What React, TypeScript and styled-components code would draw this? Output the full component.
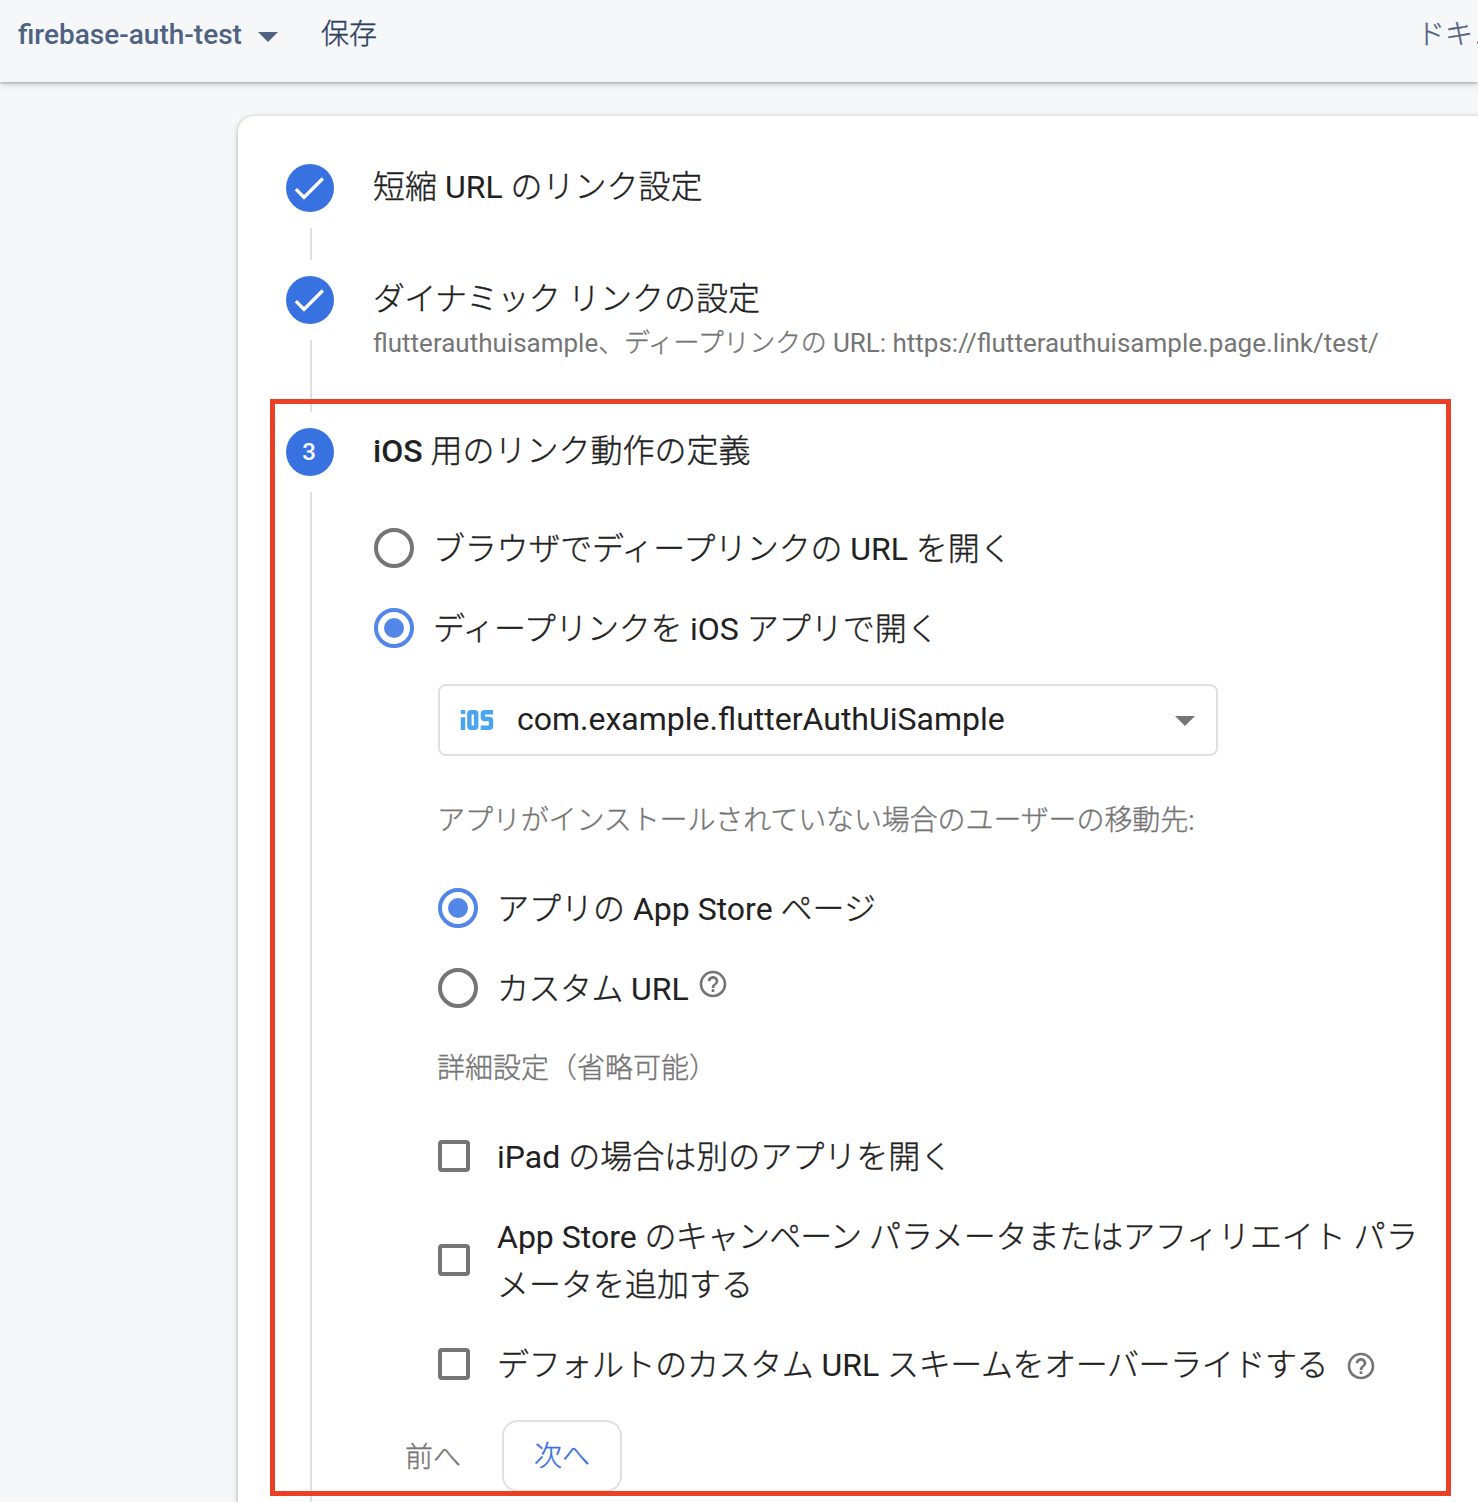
import React from "react";
import styled, { createGlobalStyle, css } from "styled-components";
import { MdCheck, MdHelpOutline } from "react-icons/md";

const FONT = `Roboto, "Noto Sans CJK JP", sans-serif`;

const GlobalStyle = createGlobalStyle`
  *, *::before, *::after { box-sizing: border-box; }
  html, body { margin: 0; background: #f6f7f9; }
  body { font-family: ${FONT}; color: #212121; overflow: hidden; }
  button { font: inherit; }
`;

const Page = styled.div`
  position: relative;
  display: flex;
  flex-direction: column;
  width: 1478px;
  height: 1502px;
  overflow: hidden;
  background: #f6f7f9;
`;

const TopBar = styled.header`
  display: flex;
  align-items: flex-start;
  flex: none;
  height: 82px;
  padding: 15px 0 0 18px;
  font-size: 28px;
  line-height: 40px;
  white-space: nowrap;
  color: #4e6282;
  background: #f6f7f9;
  box-shadow: 0 1px 3px rgba(0, 0, 0, 0.28), 0 2px 8px rgba(0, 0, 0, 0.14);
  z-index: 1;
`;

const ProjectButton = styled.div`
  display: flex;
  align-items: center;
  gap: 16px;
  font-weight: 500;
`;

const SaveLabel = styled.div`
  margin-left: 43px;
  color: #2c405f;
`;

const DocsLink = styled.div`
  margin-left: auto;
  width: 61px;
  overflow: hidden;
`;

const Caret = styled.span<{ $color: string; $drop: number }>`
  flex: none;
  width: 0;
  height: 0;
  border: 10px solid transparent;
  border-top-color: ${(p) => p.$color};
  border-bottom: 0;
  margin-top: ${(p) => p.$drop}px;
`;

const Content = styled.main`
  display: flex;
  flex: 1;
  padding: 34px 0 0 238px;
`;

const Card = styled.section`
  flex: none;
  width: 1280px;
  padding: 48px 48px 0;
  border-radius: 16px 0 0 0;
  background: #fff;
  box-shadow: 0 1px 4px rgba(0, 0, 0, 0.26), 0 2px 8px rgba(0, 0, 0, 0.08);
`;

const Step = styled.article`
  display: flex;
  align-items: stretch;
`;

const Rail = styled.div`
  display: flex;
  flex-direction: column;
  align-items: center;
  flex: none;
  width: 48px;
  margin-right: 39px;
`;

const Marker = styled.div`
  display: flex;
  align-items: center;
  justify-content: center;
  flex: none;
  width: 48px;
  height: 48px;
  border-radius: 50%;
  background: #3871e0;
  color: #fff;
  font-size: 24px;
  font-weight: 500;
  padding-right: 2px;
`;

const Connector = styled.div<{ $length: number }>`
  width: 2px;
  height: ${(p) => p.$length}px;
  margin: 16px 0 16px 2px;
  background: #e0e0e0;
`;

const StepBody = styled.div`
  flex: none;
  width: 1050px;
`;

const StepTitle = styled.h2<{ $active?: boolean }>`
  margin: 0;
  font-size: 32px;
  font-weight: ${(p) => (p.$active ? 500 : 400)};
  line-height: 46px;
  white-space: nowrap;
`;

const StepSummary = styled.p`
  margin: 0;
  font-size: 26px;
  line-height: 42px;
  white-space: nowrap;
  color: #757575;
`;

const Form = styled.div`
  display: flex;
  flex-direction: column;
  padding: 34px 0 0 1px;
`;

const Nested = styled.div`
  display: flex;
  flex-direction: column;
  padding: 16px 0 0 64px;
`;

const RadioRow = styled.label`
  display: flex;
  align-items: center;
  height: 80px;
  gap: 19px;
  font-size: 32px;
  line-height: 50px;
  white-space: nowrap;
`;

const RadioMark = styled.span<{ $checked?: boolean }>`
  display: flex;
  align-items: center;
  justify-content: center;
  flex: none;
  width: 40px;
  height: 40px;
  border: 4px solid ${(p) => (p.$checked ? "#5286e7" : "#757575")};
  border-radius: 50%;

  ${(p) =>
    p.$checked &&
    css`
      &::after {
        content: "";
        width: 20px;
        height: 20px;
        border-radius: 50%;
        background: #5286e7;
      }
    `}
`;

const AppSelect = styled.div`
  display: flex;
  align-items: center;
  width: 780px;
  height: 72px;
  padding: 0 21px 0 20px;
  border: 2px solid #e0e0e0;
  border-radius: 8px;
  font-size: 32px;
  line-height: 48px;
`;

const AppId = styled.span`
  flex: 1;
  margin: -2px 0 0 23px;
`;

const Hint = styled.p<{ $top: number; $bottom: number }>`
  margin: ${(p) => p.$top}px 0 ${(p) => p.$bottom}px -1px;
  font-size: 28px;
  line-height: 48px;
  white-space: nowrap;
  color: #757575;
`;

const CheckList = styled.div`
  display: flex;
  flex-direction: column;
  gap: 32px;
`;

const CheckRow = styled.label`
  display: flex;
  align-items: center;
  gap: 27px;
  font-size: 32px;
  line-height: 48px;
  white-space: nowrap;
`;

const CheckMark = styled.span`
  flex: none;
  width: 32px;
  height: 32px;
  border: 4px solid #757575;
  border-radius: 4px;
`;

const CheckLabel = styled.span`
  padding-top: 1px;
  margin-bottom: -1px;
`;

const RadioLabel = styled.span`
  padding-top: 2px;
`;

const HelpIcon = styled(MdHelpOutline)<{ $left: number; $lift: number }>`
  flex: none;
  width: 32px;
  height: 32px;
  margin-left: ${(p) => p.$left}px;
  margin-bottom: ${(p) => p.$lift}px;
  color: #757575;
`;

const Actions = styled.div`
  display: flex;
  margin: 32px 0 0 -64px;
  font-size: 28px;
  line-height: 68px;
`;

const BackButton = styled.button`
  width: 118px;
  padding: 3px 0 0;
  border: 0;
  background: none;
  color: #757575;
`;

const NextButton = styled.button`
  width: 120px;
  height: 72px;
  margin-left: 10px;
  padding: 1px 0 0;
  border: 2px solid #e0e0e0;
  border-radius: 16px;
  background: #fff;
  color: #3871e0;
`;

const Highlight = styled.div`
  position: absolute;
  left: 270px;
  top: 399px;
  width: 1181px;
  height: 1097px;
  border: 5px solid #eb4025;
  pointer-events: none;
  z-index: 2;
`;

const Cjk = styled.span<{ $track: number }>`
  font-weight: 300;
  letter-spacing: ${(p) => p.$track}px;
  -webkit-text-stroke: 0.35px currentColor;
`;

/* Latin runs keep the inherited weight, Japanese runs are set light.
   tracks holds the letter spacing of each Japanese run in turn. */
function Mixed({ text, tracks = [] }: { text: string; tracks?: number[] }) {
  const runs = text.match(/[\u3000-\u9fff\uff00-\uffef]+|[^\u3000-\u9fff\uff00-\uffef]+/g) ?? [];
  let n = 0;
  return (
    <span>
      {runs.map((run, i) =>
        /[\u3000-\u9fff\uff00-\uffef]/.test(run) ? (
          <Cjk key={i} $track={tracks[n++] ?? 0}>
            {run}
          </Cjk>
        ) : (
          <React.Fragment key={i}>{run}</React.Fragment>
        )
      )}
    </span>
  );
}

function IosLogo() {
  return (
    <svg width="34" height="22" viewBox="0 0 34 22" fill="none" stroke="#4aa5f0" strokeWidth="4.400">
      <path d="M3 1v4M3 8.300V21" />
      <rect x="9.400" y="3.200" width="6.800" height="15.600" rx="1.500" />
      <path d="M33 3.200h-8.300q-1.800 0-1.800 1.800v3.200q0 1.800 1.800 1.800h4.500q1.800 0 1.800 1.800v5.200q0 1.800-1.800 1.800H20.700" />
    </svg>
  );
}

export default function App() {
  return (
    <Page>
      <GlobalStyle />
      <TopBar>
        <ProjectButton>
          firebase-auth-test
          <Caret $color="#4e6282" $drop={3} />
        </ProjectButton>
        <SaveLabel>
          <Mixed text="保存" />
        </SaveLabel>
        <DocsLink>
          <Mixed text="ドキュメント" />
        </DocsLink>
      </TopBar>

      <Content>
        <Card>
          <Step>
            <Rail>
              <Marker>
                <MdCheck size={40} />
              </Marker>
              <Connector $length={32} />
            </Rail>
            <StepBody>
              <StepTitle>
                <Mixed text="短縮 URL のリンク設定" />
              </StepTitle>
            </StepBody>
          </Step>

          <Step>
            <Rail>
              <Marker>
                <MdCheck size={40} />
              </Marker>
              <Connector $length={72} />
            </Rail>
            <StepBody>
              <StepTitle>
                <Mixed text="ダイナミック リンクの設定" tracks={[-0.7, 0]} />
              </StepTitle>
              <StepSummary>
                <Mixed
                  text="flutterauthuisample、ディープリンクの URL: https://flutterauthuisample.page.link/test/"
                  tracks={[-0.27]}
                />
              </StepSummary>
            </StepBody>
          </Step>

          <Step>
            <Rail>
              <Marker>3</Marker>
              <Connector $length={1100} />
            </Rail>
            <StepBody>
              <StepTitle $active>
                <Mixed text="iOS 用のリンク動作の定義" />
              </StepTitle>
              <Form>
                <RadioRow>
                  <RadioMark />
                  <RadioLabel>
                    <Mixed text="ブラウザでディープリンクの URL を開く" tracks={[-0.2]} />
                  </RadioLabel>
                </RadioRow>
                <RadioRow>
                  <RadioMark $checked />
                  <RadioLabel>
                    <Mixed text="ディープリンクを iOS アプリで開く" tracks={[-0.35]} />
                  </RadioLabel>
                </RadioRow>
                <Nested>
                  <AppSelect>
                    <IosLogo />
                    <AppId>com.example.flutterAuthUiSample</AppId>
                    <Caret $color="#757575" $drop={1} />
                  </AppSelect>
                  <Hint $top={41} $bottom={23}>
                    <Mixed text="アプリがインストールされていない場合のユーザーの移動先:" tracks={[-0.11]} />
                  </Hint>
                  <RadioRow>
                    <RadioMark $checked />
                    <RadioLabel>
                      <Mixed text="アプリの App Store ページ" />
                    </RadioLabel>
                  </RadioRow>
                  <RadioRow>
                    <RadioMark />
                    <RadioLabel>
                      <Mixed text="カスタム URL" tracks={[-0.5]} />
                    </RadioLabel>
                    <HelpIcon $left={-11} $lift={8} />
                  </RadioRow>
                  <Hint $top={17} $bottom={39}>
                    <Mixed text="詳細設定（省略可能）" />
                  </Hint>
                  <CheckList>
                    <CheckRow>
                      <CheckMark />
                      <CheckLabel>
                        <Mixed text="iPad の場合は別のアプリを開く" />
                      </CheckLabel>
                    </CheckRow>
                    <CheckRow>
                      <CheckMark />
                      <CheckLabel>
                        <Mixed
                          text="App Store のキャンペーン パラメータまたはアフィリエイト パラ"
                          tracks={[-0.85, -0.12, 0.5]}
                        />
                        <br />
                        <Mixed text="メータを追加する" />
                      </CheckLabel>
                    </CheckRow>
                    <CheckRow>
                      <CheckMark />
                      <CheckLabel>
                        <Mixed
                          text="デフォルトのカスタム URL スキームをオーバーライドする"
                          tracks={[-0.35, -0.4]}
                        />
                      </CheckLabel>
                      <HelpIcon $left={-10} $lift={-4} />
                    </CheckRow>
                  </CheckList>
                  <Actions>
                    <BackButton>
                      <Mixed text="前へ" />
                    </BackButton>
                    <NextButton>
                      <Mixed text="次へ" />
                    </NextButton>
                  </Actions>
                </Nested>
              </Form>
            </StepBody>
          </Step>
        </Card>
      </Content>
      <Highlight />
    </Page>
  );
}
